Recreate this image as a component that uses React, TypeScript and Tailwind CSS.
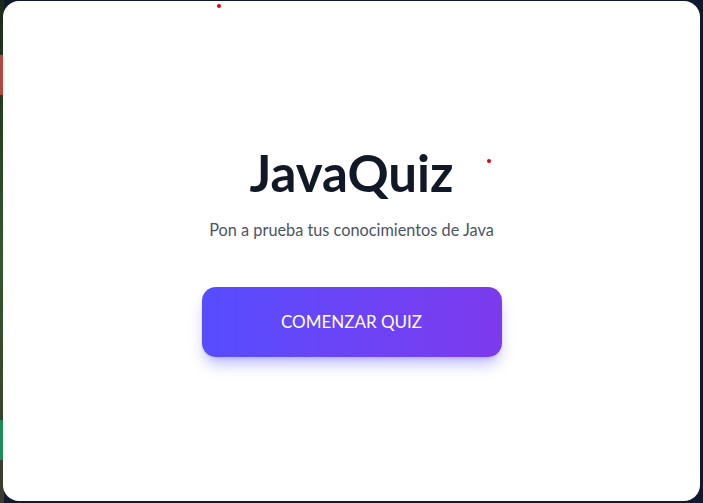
export default function App() {
  return (
    <div className="relative h-[503px] w-[703px] overflow-hidden bg-[#0f1a2e] pt-[1px] pr-[3px] pb-[2px] pl-[3px] font-['Lato','Noto_Sans',sans-serif]">
      {/* fondo */}
      <div className="absolute inset-y-0 left-0 w-[4px] bg-gradient-to-b from-[#1d2a1a] via-[#2f5a2a] to-[#3a3a2e]" />
      <div className="absolute left-0 top-[55px] h-[40px] w-[3px] bg-[#b8463a]" />
      <div className="absolute left-0 top-[420px] h-[40px] w-[3px] bg-[#1f8a5a]" />

      <div className="relative flex h-full flex-col items-center justify-center rounded-[16px] bg-white pt-[2px]">
        {/* puntos */}
        <span className="absolute left-[214px] top-[3px] h-[4px] w-[4px] rounded-full bg-red-600" />
        <span className="absolute left-[484px] top-[158px] h-[4px] w-[4px] rounded-full bg-red-600" />

        <h1 className="text-[51px] font-bold leading-none text-[#111827]">JavaQuiz</h1>
        <p className="mt-[20px] text-[16.3px] text-[#4b5563]">Pon a prueba tus conocimientos de Java</p>
        <button className="mt-[45px] h-[70px] w-[300px] rounded-[14px] bg-gradient-to-r from-[#564cff] to-[#7c3aed] text-[17px] text-white shadow-lg shadow-indigo-500/40">
          COMENZAR QUIZ
        </button>
      </div>
    </div>
  );
}
